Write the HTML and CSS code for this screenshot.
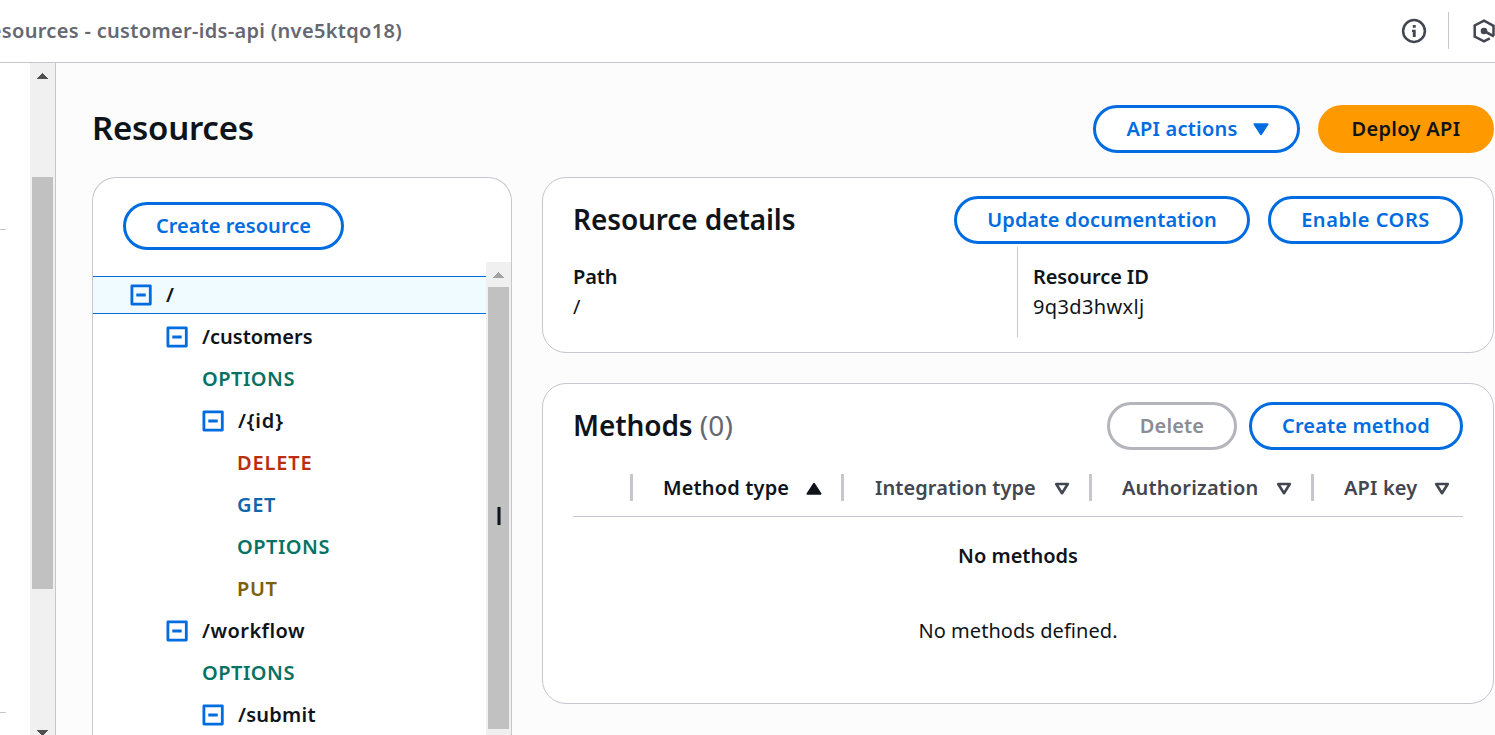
FILE: index.html
```
<!DOCTYPE html>
<html lang="en">
<head>
<meta charset="utf-8">
<title>API Gateway - Resources</title>
<link rel="stylesheet" href="styles.css">
</head>
<body>
<header class="topbar">
  <div class="crumb"><span>Resources - customer-ids-api (nve5ktqo18)</span></div>
  <div class="tools">
    <svg class="info" width="26" height="26" viewBox="0 0 26 26"><circle cx="13" cy="13" r="10.9" fill="none" stroke="#424650" stroke-width="2.5"/><path d="M11.8 7h2.9v2.8h-2.9zM11 11.8h3.7V19h-2.9v-5H11z" fill="#424650"/></svg>
    <span class="rule"></span>
    <svg class="hex" width="23" height="26" viewBox="0 0 23 26"><path d="M21.5 17.5V7.8L12 2.6 2.7 7.5v11L12 23.4l5.8-3" fill="none" stroke="#424650" stroke-width="2.5"/><circle cx="12" cy="13" r="3.3" fill="#424650"/><path d="M12 13l10 5.4" stroke="#424650" stroke-width="2.6"/></svg>
  </div>
</header>
<div class="shell">
  <aside class="nav"><hr class="line first"><hr class="line second"></aside>
  <div class="scroll nav-scroll">
    <svg class="arrow" width="11" height="6" shape-rendering="crispEdges"><path d="M5.5 0L11 6H0z" fill="#505050"/></svg>
    <div class="thumb"></div>
    <svg class="arrow" width="11" height="6" shape-rendering="crispEdges"><path d="M0 0h11L5.5 6z" fill="#505050"/></svg>
  </div>
  <main class="main">
    <div class="page-head">
      <h1><span>Resources</span></h1>
      <button class="btn w-actions"><span>API actions</span><svg class="caret" width="16" height="13" viewBox="0 0 16 13"><path d="M1.5 1.2h13L8 11.2z" fill="#006ce0" stroke="#006ce0" stroke-width="2" stroke-linejoin="round"/></svg></button>
      <button class="btn primary w-deploy"><span>Deploy API</span></button>
    </div>
    <div class="columns">
      <section class="card tree-card">
        <button class="btn w-create"><span>Create resource</span></button>
        <div class="tree-wrap">
          <ul class="tree">
            <li class="row selected d0"><svg class="box" width="22" height="22" viewBox="0 0 22 22"><path d="M1.9 1.9h18.4v18.2H1.9zM6.3 11h9.4"/></svg><span>/</span></li>
            <li class="row d1"><svg class="box" width="22" height="22" viewBox="0 0 22 22"><path d="M1.9 1.9h18.4v18.2H1.9zM6.3 11h9.4"/></svg><span>/customers</span></li>
            <li class="row d2 options"><span>OPTIONS</span></li>
            <li class="row d2"><svg class="box" width="22" height="22" viewBox="0 0 22 22"><path d="M1.9 1.9h18.4v18.2H1.9zM6.3 11h9.4"/></svg><span class="t-id">/{id}</span></li>
            <li class="row d3 delete"><span>DELETE</span></li>
            <li class="row d3 get"><span>GET</span></li>
            <li class="row d3 options"><span>OPTIONS</span></li>
            <li class="row d3 put"><span>PUT</span></li>
            <li class="row d1"><svg class="box" width="22" height="22" viewBox="0 0 22 22"><path d="M1.9 1.9h18.4v18.2H1.9zM6.3 11h9.4"/></svg><span class="t-flow">/workflow</span></li>
            <li class="row d2 options"><span>OPTIONS</span></li>
            <li class="row d2"><svg class="box" width="22" height="22" viewBox="0 0 22 22"><path d="M1.9 1.9h18.4v18.2H1.9zM6.3 11h9.4"/></svg><span class="t-submit">/submit</span></li>
          </ul>
          <div class="scroll tree-scroll">
            <svg class="arrow" width="11" height="6" shape-rendering="crispEdges"><path d="M5.5 0L11 6H0z" fill="#a3a3a3"/></svg>
            <div class="thumb"><span class="grip"></span></div>
          </div>
        </div>
      </section>
      <div class="details">
        <section class="card info-card">
          <div class="card-head">
            <h2><span>Resource details</span></h2>
            <button class="btn w-update"><span>Update documentation</span></button>
            <button class="btn w-cors"><span>Enable CORS</span></button>
          </div>
          <dl class="pairs">
            <div class="pair path"><dt>Path</dt><dd>/</dd></div>
            <div class="pair rid"><dt>Resource ID</dt><dd>9q3d3hwxlj</dd></div>
          </dl>
        </section>
        <section class="card methods-card">
          <div class="card-head">
            <h2><span>Methods</span> <span class="count">(0)</span></h2>
            <button class="btn disabled w-delete"><span>Delete</span></button>
            <button class="btn w-method"><span>Create method</span></button>
          </div>
          <div class="thead">
            <div class="th check"></div>
            <div class="th sorted c1"><span>Method type</span><svg width="16" height="15" viewBox="0 -2 16 15"><path d="M1.5 11.8h13L8 1.8z" fill="#0f141a" stroke="#0f141a" stroke-width="2" stroke-linejoin="round"/></svg></div>
            <div class="th c2"><span>Integration type</span><svg width="16" height="15" viewBox="0 -2 16 15"><path d="M2.2 2h11.6L8 11.2z" fill="none" stroke="#424650" stroke-width="2.6" stroke-linejoin="round"/></svg></div>
            <div class="th c3"><span>Authorization</span><svg width="16" height="15" viewBox="0 -2 16 15"><path d="M2.2 2h11.6L8 11.2z" fill="none" stroke="#424650" stroke-width="2.6" stroke-linejoin="round"/></svg></div>
            <div class="th c4"><span>API key</span><svg width="16" height="15" viewBox="0 -2 16 15"><path d="M2.2 2h11.6L8 11.2z" fill="none" stroke="#424650" stroke-width="2.6" stroke-linejoin="round"/></svg></div>
          </div>
          <div class="empty"><strong>No methods</strong><p>No methods defined.</p></div>
        </section>
      </div>
    </div>
  </main>
</div>
</body>
</html>
```
FILE: styles.css
```
* { box-sizing: border-box; }
body { margin: 0; width: 1495px; height: 735px; overflow: hidden; background: #fff; color: #0f141a; font: 20px/30px "Noto Sans", "Open Sans", sans-serif; }
h1, h2, dl, dd, ul, p { margin: 0; padding: 0; }
span, h1, h2 { white-space: nowrap; }

.topbar { display: flex; justify-content: space-between; height: 63px; border-bottom: 1px solid #c6c6cd; }
.crumb { display: flex; justify-content: flex-end; width: 402px; padding-top: 16px; overflow: hidden; color: #656871; font-weight: 600; letter-spacing: .32px; }
.tools { display: flex; width: 94px; }
.info { flex: none; margin-top: 18px; }
.rule { flex: none; width: 1px; height: 37px; margin: 12px 23px 0 21px; background: #c6c6cd; }
.hex { flex: none; margin-top: 18px; }

.shell { display: flex; height: 672px; overflow: hidden; }
.nav { width: 30px; }
.line { width: 6px; height: 1px; margin: 0; border: 0; background: #c6c6cd; }
.first { margin-top: 166px; }
.second { margin-top: 482px; }
.scroll { display: flex; flex-direction: column; align-items: center; width: 25px; background: #f0f0f0; }
.scroll .thumb { flex: none; width: 21px; background: #c1c1c1; }
.scroll .arrow { flex: none; }
.nav-scroll { height: 672px; padding-top: 10px; overflow: hidden; }
.nav-scroll .thumb { height: 412px; margin: 98px 0 141px; }
.main { flex: 1; height: 672px; padding: 42px 1px 0 36px; border-left: 1px solid #c6c6cd; background: #fcfcfd; }

.page-head { display: flex; align-items: center; height: 48px; margin-bottom: 24px; }
h1 { margin-right: auto; padding-bottom: 2px; font-size: 33px; line-height: 46px; font-weight: 600; letter-spacing: -.25px; }
.btn { display: flex; flex: none; align-items: center; justify-content: center; height: 48px; padding: 0; border: 3px solid #006ce0; border-radius: 24px; background: #fff; color: #006ce0; font: 600 20px/30px "Noto Sans", sans-serif; letter-spacing: .15px; }
.primary { border-color: #f90; background: #f90; color: #0f141a; margin-left: 18px; }
.disabled { border-color: #b4b4bb; color: #8c8c94; }
.w-actions { width: 207px; padding-left: 2px; letter-spacing: .2px; }
.caret { margin-left: 15px; }
.w-deploy { width: 176px; letter-spacing: .3px; }
.w-create { width: 221px; margin: 24px 0 12px 30px; letter-spacing: .05px; }
.w-update { width: 296px; margin-right: 18px; }
.w-cors { width: 195px; letter-spacing: .55px; }
.w-delete { width: 130px; margin-right: 12px; }
.w-method { width: 214px; }

.columns { display: flex; gap: 30px; }
.card { border: 1px solid #c6c6cd; border-radius: 24px; background: #fff; }
.tree-card { width: 420px; height: 558px; border-bottom: 0; border-radius: 24px 24px 0 0; overflow: hidden; }
.tree-wrap { display: flex; height: 473px; }
.tree { flex: 1; padding-top: 14px; list-style: none; }
.row { display: flex; align-items: center; height: 42px; font-weight: 600; }
.selected { height: 38px; margin-bottom: 2px; border: solid #006ce0; border-width: 1px 0; background: #f0fbff; }
.box { flex: none; margin-right: 14px; fill: none; stroke: #006ce0; stroke-width: 2.8; stroke-linejoin: round; }
.d0 { padding-left: 37px; }
.d1 { padding-left: 73px; }
.d2 { padding-left: 109px; }
.d3 { padding-left: 144px; }
.options { color: #077264; letter-spacing: .5px; }
.delete { color: #ba2e0f; letter-spacing: .85px; }
.get { color: #0d67aa; letter-spacing: .7px; }
.put { color: #7d6009; letter-spacing: .6px; }
.t-id { letter-spacing: .8px; }
.t-flow { letter-spacing: .45px; }
.t-submit { letter-spacing: .25px; }
.tree-scroll { padding-top: 10px; }
.tree-scroll .thumb { display: flex; justify-content: center; height: 442px; margin-top: 9px; }
.grip { width: 4px; height: 18px; margin-top: 220px; border: solid #5f666e; border-width: 0 1px; background: #0f141a; }

.details { flex: 1; }
.info-card { height: 176px; padding: 18px 30px 0; margin-bottom: 30px; }
.card-head { display: flex; align-items: center; height: 48px; }
h2 { margin-right: auto; padding-bottom: 3px; font-size: 28px; line-height: 38px; font-weight: 600; letter-spacing: -.1px; }
.count { color: #656871; font-weight: 400; letter-spacing: .2px; }
.pairs { display: flex; margin-top: 3px; }
.pair { height: 90px; padding-top: 15px; }
.path { width: 444px; }
.rid { padding-left: 15px; border-left: 1px solid #c6c6cd; }
dt { font-weight: 600; letter-spacing: -.1px; }
dd { letter-spacing: .35px; }
.methods-card { height: 321px; padding: 18px 30px 0; }
.thead { display: flex; align-items: center; height: 67px; padding-top: 9px; border-bottom: 1px solid #c6c6cd; }
.th { display: flex; align-items: center; justify-content: space-between; height: 27px; border-right: 3px solid #c6c6cd; color: #424650; font-weight: 600; letter-spacing: .15px; }
.sorted { color: #0f141a; }
.check { width: 60px; }
.c1 { width: 211px; padding: 0 19px 0 30px; }
.c2 { width: 248px; padding: 0 19px 0 31px; letter-spacing: .06px; }
.c3 { width: 222px; padding: 0 19px 0 30px; letter-spacing: .18px; }
.c4 { flex: 1; border: 0; padding: 0 13px 0 30px; }
.empty { display: flex; flex-direction: column; align-items: center; padding-top: 24px; }
.empty strong { font-weight: 600; }
.empty p { margin-top: 45px; letter-spacing: .05px; }
```
